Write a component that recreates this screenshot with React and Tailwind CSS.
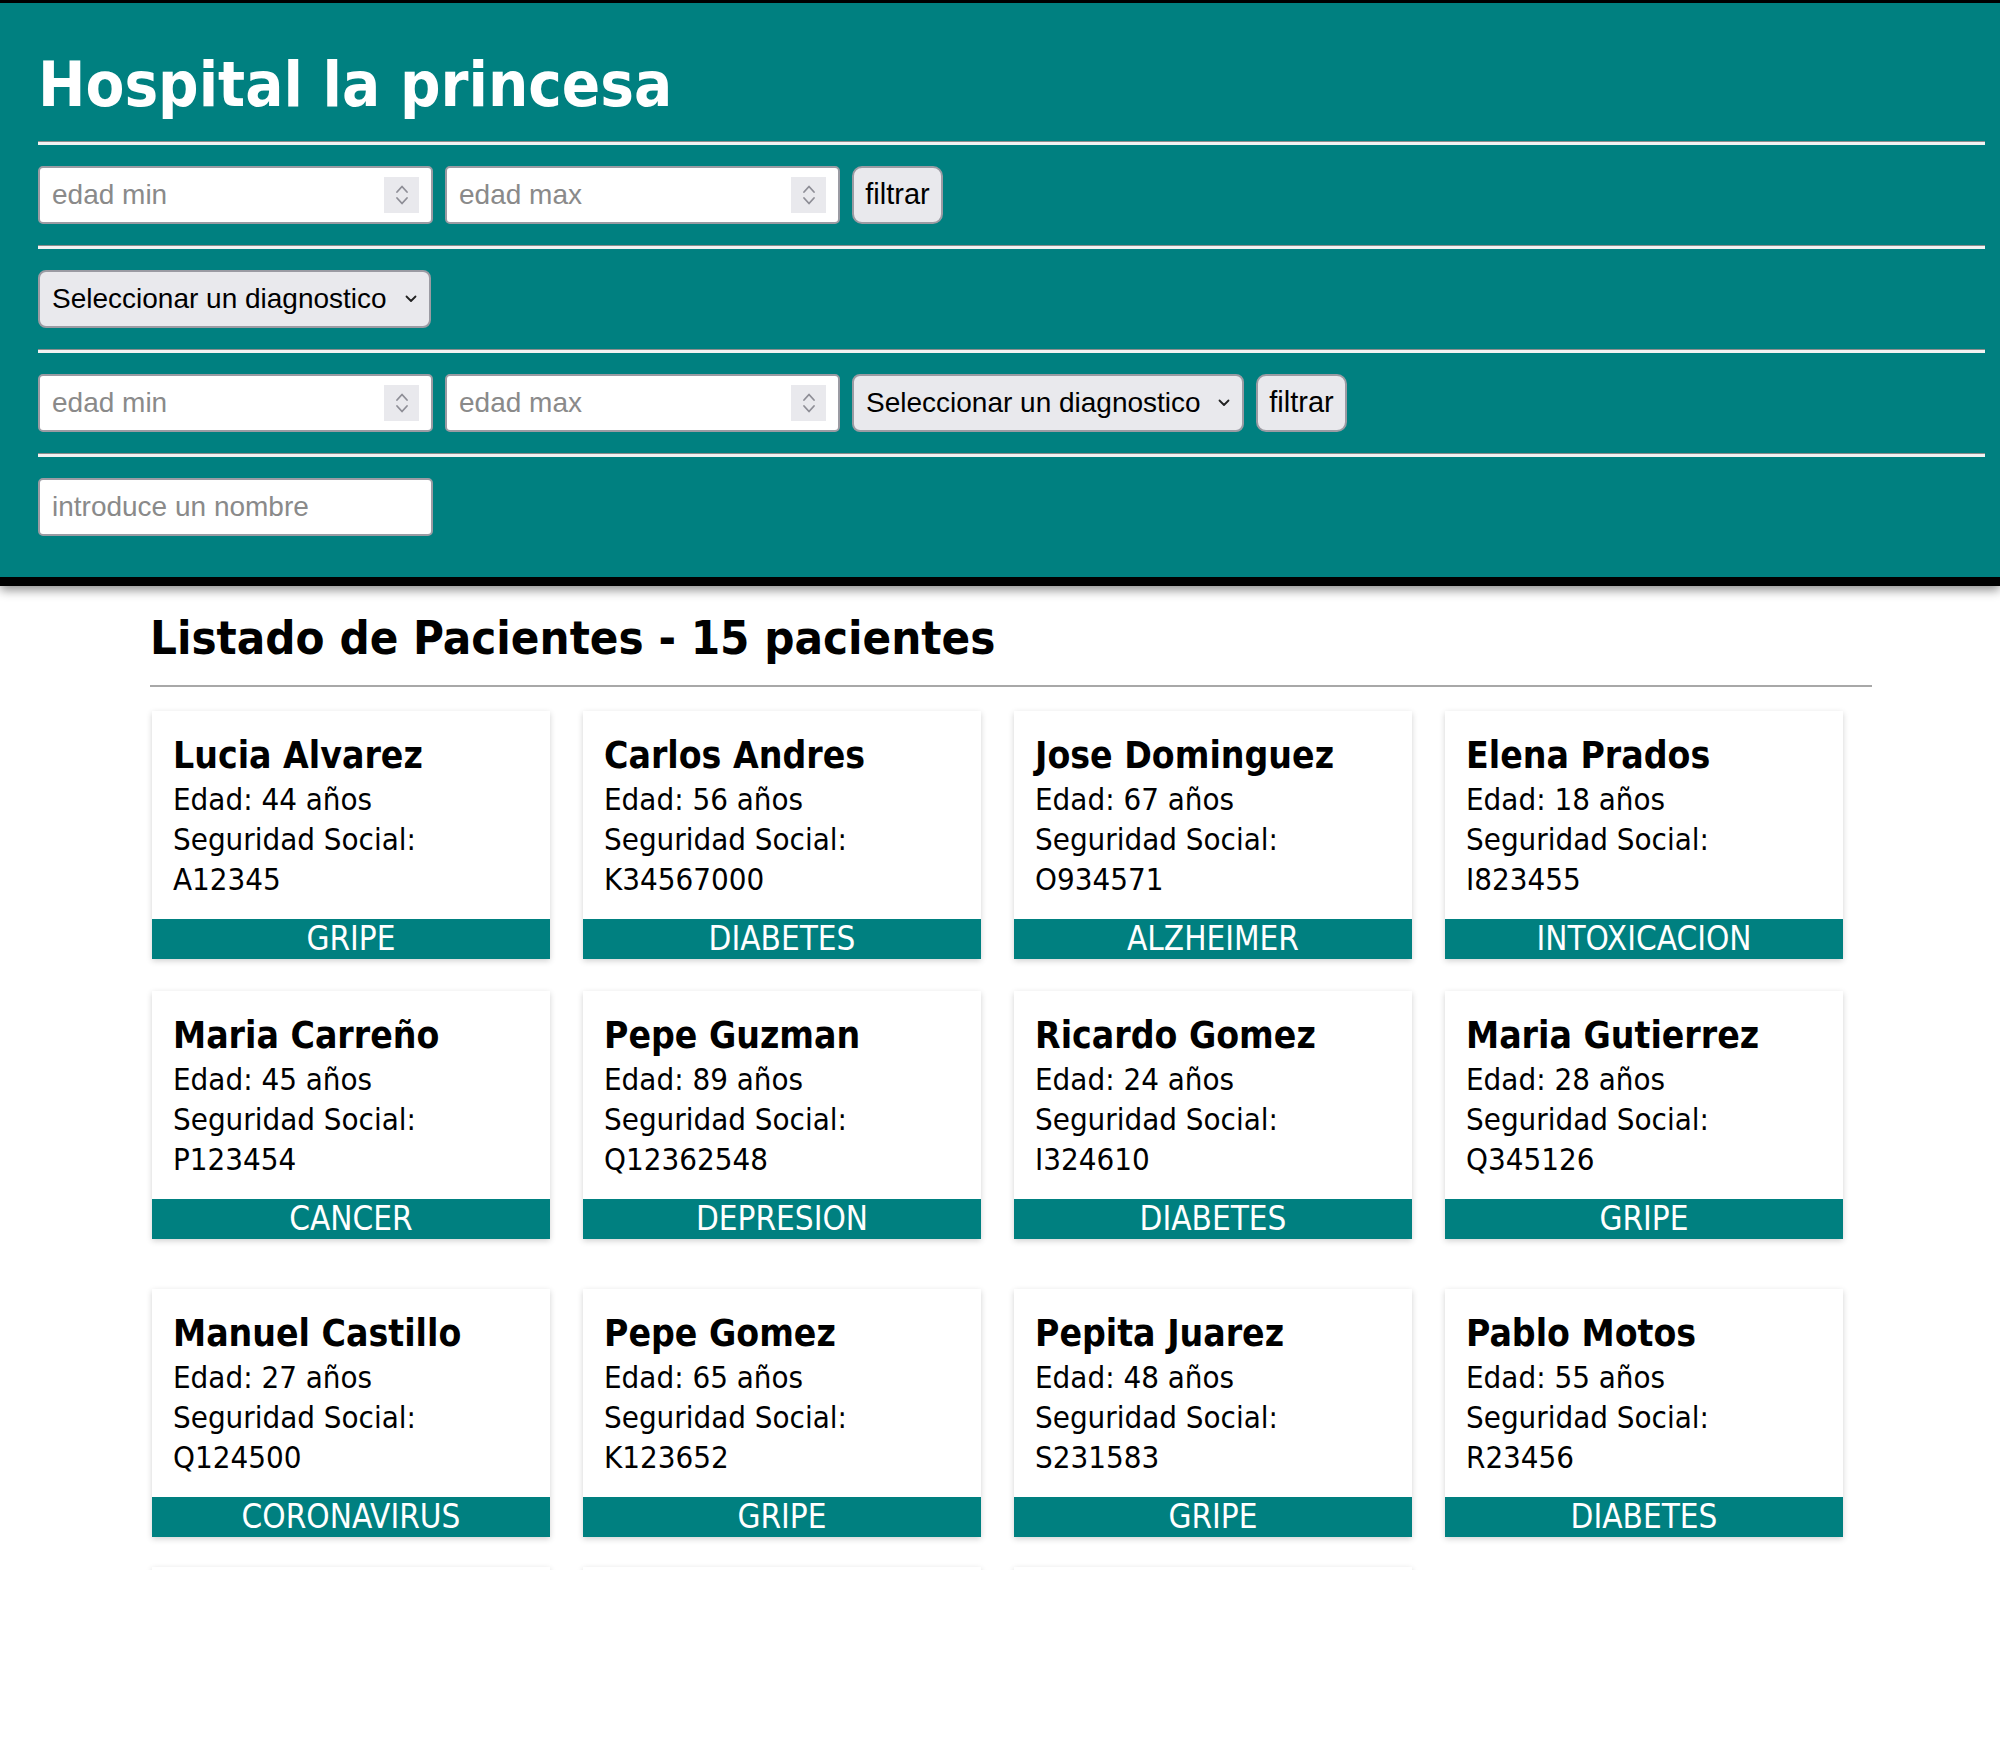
import React from 'react';

const pacientes = [
  { nombre: 'Lucia Alvarez', edad: 44, ss: 'A12345', diagnostico: 'gripe' },
  { nombre: 'Carlos Andres', edad: 56, ss: 'K34567000', diagnostico: 'diabetes' },
  { nombre: 'Jose Dominguez', edad: 67, ss: 'O934571', diagnostico: 'alzheimer' },
  { nombre: 'Elena Prados', edad: 18, ss: 'I823455', diagnostico: 'intoxicacion' },
  { nombre: 'Maria Carreño', edad: 45, ss: 'P123454', diagnostico: 'cancer' },
  { nombre: 'Pepe Guzman', edad: 89, ss: 'Q12362548', diagnostico: 'depresion' },
  { nombre: 'Ricardo Gomez', edad: 24, ss: 'I324610', diagnostico: 'diabetes' },
  { nombre: 'Maria Gutierrez', edad: 28, ss: 'Q345126', diagnostico: 'gripe' },
  { nombre: 'Manuel Castillo', edad: 27, ss: 'Q124500', diagnostico: 'coronavirus' },
  { nombre: 'Pepe Gomez', edad: 65, ss: 'K123652', diagnostico: 'gripe' },
  { nombre: 'Pepita Juarez', edad: 48, ss: 'S231583', diagnostico: 'gripe' },
  { nombre: 'Pablo Motos', edad: 55, ss: 'R23456', diagnostico: 'diabetes' },
];

// margin above each row of cards (rows are not evenly spaced in the original)
const rowMargins = ['mt-0', 'mt-[32px]', 'mt-[50px]', 'mt-[30px]'];

const cardFont = { fontFamily: '"DejaVu Sans Condensed", Tahoma, "Liberation Sans", sans-serif' };
const formFont = { fontFamily: '"Liberation Sans", Arial, sans-serif' };

const Hr = ({ className = '' }) => (
  <div className={`h-[4px] border-t border-[#8c8c8c] bg-[#f2f2f2] ${className}`} />
);

const Spinner = () => (
  <div className="w-[35px] h-[36px] bg-[#e9e9ed] flex items-center justify-center mr-[12px]">
    <svg width="16" height="28" viewBox="0 0 16 28" fill="none" stroke="#8e8e96" strokeWidth="1.8" strokeLinecap="round" strokeLinejoin="round">
      <path d="M3 11 L8 5.5 L13 11" />
      <path d="M3 17 L8 22.5 L13 17" />
    </svg>
  </div>
);

const NumberInput = ({ placeholder }) => (
  <div className="w-[395px] h-[58px] bg-white border-2 border-[#9b9ba3] rounded-[5px] flex items-center">
    <input
      type="text"
      placeholder={placeholder}
      className="flex-1 min-w-0 pl-[12px] bg-transparent outline-none text-[28px] text-black placeholder:text-[#8a8a8a]"
      style={formFont}
    />
    <Spinner />
  </div>
);

const Select = ({ width }) => (
  <div className={`relative ${width} h-[58px]`}>
    <select
      className="appearance-none w-full h-full bg-[#e9e9ed] border-2 border-[#9b9ba3] rounded-[8px] pl-[12px] pr-[40px] text-[28px] text-black outline-none"
      style={formFont}
    >
      <option>Seleccionar un diagnostico</option>
    </select>
    <svg
      className="absolute right-[14px] top-[25px] pointer-events-none"
      width="12"
      height="8"
      viewBox="0 0 12 8"
      fill="none"
      stroke="#222"
      strokeWidth="1.8"
      strokeLinecap="round"
      strokeLinejoin="round"
    >
      <path d="M1.5 1.5 L6 6 L10.5 1.5" />
    </svg>
  </div>
);

const FiltrarButton = () => (
  <button
    className="w-[91px] h-[58px] bg-[#e9e9ed] border-2 border-[#9b9ba3] rounded-[10px] text-[29px] text-black"
    style={formFont}
  >
    filtrar
  </button>
);

const PatientCard = ({ paciente }) => (
  <div className="w-[398px] bg-white shadow-[0_2px_6px_rgba(0,0,0,0.18)] flex flex-col">
    <div className="pt-[21px] pl-[21px] pr-[16px] pb-[20px] text-black">
      <h3 className="text-[37px] leading-[47px] font-bold">{paciente.nombre}</h3>
      <p className="text-[31px] leading-[40px]">Edad: {paciente.edad} años</p>
      <p className="text-[31px] leading-[40px]">Seguridad Social:</p>
      <p className="text-[31px] leading-[40px]">{paciente.ss}</p>
    </div>
    <div className="h-[40px] bg-[#008080] text-white text-center text-[33px] leading-[40px] uppercase">
      {paciente.diagnostico}
    </div>
  </div>
);

const App = () => {
  const rows = [];
  for (let i = 0; i < pacientes.length; i += 4) {
    rows.push(pacientes.slice(i, i + 4));
  }

  return (
    <div className="min-h-[1743px] bg-white" style={cardFont}>
      {/* Header with filters */}
      <header className="relative z-10 bg-[#008080] border-t-[3px] border-b-[9px] border-black pl-[38px] pr-[15px] pt-[50px] pb-[41px] shadow-[0_4px_10px_rgba(0,0,0,0.45)]">
        <h1 className="text-[63px] leading-[64px] font-bold text-white">Hospital la princesa</h1>

        <Hr className="mt-[24px]" />
        <div className="py-[21px] flex gap-[12px]">
          <NumberInput placeholder="edad min" />
          <NumberInput placeholder="edad max" />
          <FiltrarButton />
        </div>

        <Hr />
        <div className="py-[21px] flex">
          <Select width="w-[393px]" />
        </div>

        <Hr />
        <div className="py-[21px] flex gap-[12px]">
          <NumberInput placeholder="edad min" />
          <NumberInput placeholder="edad max" />
          <Select width="w-[392px]" />
          <FiltrarButton />
        </div>

        <Hr />
        <div className="pt-[21px]">
          <input
            type="text"
            placeholder="introduce un nombre"
            className="w-[395px] h-[58px] bg-white border-2 border-[#9b9ba3] rounded-[5px] pl-[12px] outline-none text-[28px] text-black placeholder:text-[#8a8a8a]"
            style={formFont}
          />
        </div>
      </header>

      {/* Patient list */}
      <main className="pl-[150px] w-[1872px]">
        <h2 className="pt-[28px] text-[47px] leading-[48px] font-bold text-black">
          Listado de Pacientes - 15 pacientes
        </h2>
        <div className="mt-[23px] h-[2px] bg-[#a8a8a8]" />

        <div className="h-[883px] overflow-hidden -ml-[10px] pl-[12px] pt-[24px]">
          {rows.map((row, r) => (
            <div key={r} className={`flex gap-[33px] ${rowMargins[r]}`}>
              {row.map((p) => (
                <PatientCard key={p.ss} paciente={p} />
              ))}
            </div>
          ))}
          <div className={`flex gap-[33px] ${rowMargins[3]}`}>
            {[0, 1, 2].map((i) => (
              <div key={i} className="w-[398px] h-[248px] bg-white shadow-[0_2px_6px_rgba(0,0,0,0.18)]" />
            ))}
          </div>
        </div>
      </main>
    </div>
  );
};

export default App;
